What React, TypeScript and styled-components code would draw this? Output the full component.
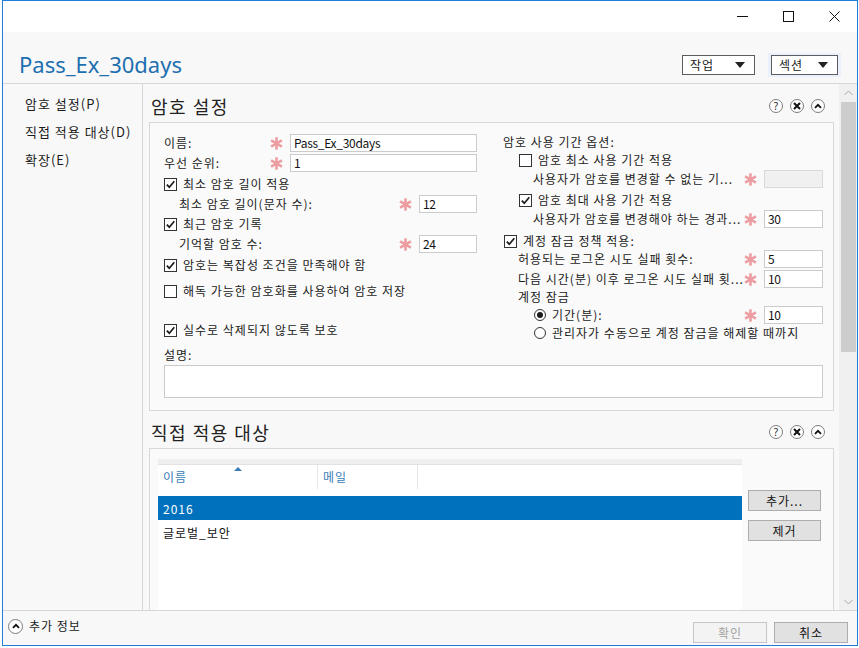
import React from "react";
import styled, { createGlobalStyle } from "styled-components";

const GlobalStyle = createGlobalStyle`
  html, body {
    margin: 0;
    padding: 0;
    background: #fff;
  }
  body {
    font-family: "Noto Sans CJK KR", "Noto Sans", sans-serif;
    font-size: 12px;
    letter-spacing: 1px;
    color: #1b1b1b;
  }
  * {
    box-sizing: border-box;
  }
`;

// Window frame
const Window = styled.div`
  margin-left: 2px;
  width: 856px;
  height: 646px;
  border: 1px solid #1f7fd6;
  display: flex;
  flex-direction: column;
  background: #f8f8f8;
  overflow: hidden;
`;

const TitleBar = styled.div`
  height: 31px;
  flex-shrink: 0;
  background: #fff;
  display: flex;
  justify-content: flex-end;
`;

const CaptionButton = styled.div`
  width: 46px;
  height: 31px;
  display: flex;
  align-items: center;
  justify-content: center;
`;

const Header = styled.div`
  height: 52px;
  flex-shrink: 0;
  border-bottom: 1px solid #d6d6d6;
  display: flex;
  align-items: flex-start;
  justify-content: space-between;
  padding: 0 16px 0 16px;
`;

const PageTitle = styled.div`
  margin-top: 17px;
  font-family: "Noto Sans", sans-serif;
  font-size: 22px;
  line-height: 30px;
  letter-spacing: 0;
  color: #1d6fb0;
`;

const HeaderActions = styled.div`
  margin-top: 21px;
  display: flex;
  align-items: center;
  gap: 10px;
`;

const DropHalo = styled.div<{ $active?: boolean }>`
  padding: 2px 3px;
  background: ${(p) => (p.$active ? "#eaf1fc" : "transparent")};
`;

const DropBox = styled.div<{ $w: number }>`
  width: ${(p) => p.$w}px;
  height: 20px;
  border: 1px solid #5c5c5c;
  background: #fff;
  display: flex;
  align-items: center;
  justify-content: space-between;
  padding: 0 9px 0 7px;
  line-height: 16px;
`;

// Body
const Body = styled.div`
  flex: 1;
  display: flex;
  min-height: 0;
`;

const Nav = styled.div`
  width: 140px;
  flex-shrink: 0;
  border-right: 1px solid #d6d6d6;
  padding-top: 5px;
`;

const NavItem = styled.div`
  height: 28px;
  display: flex;
  align-items: center;
  padding-left: 22px;
  font-size: 13px;
  color: #1b1b1b;
`;

const Main = styled.div`
  width: 696px;
  flex-shrink: 0;
  overflow: hidden;
  padding: 0 5px 0 6px;
`;

const SectionHeader = styled.div<{ $h: number }>`
  height: ${(p) => p.$h}px;
  padding: 5px 9px 0 2px;
  display: flex;
  align-items: center;
  justify-content: space-between;
`;

const SectionTitle = styled.div`
  font-size: 18px;
  line-height: 24px;
  letter-spacing: 1.5px;
  color: #222;
`;

const SectionIcons = styled.div`
  display: flex;
  gap: 7px;
`;

const RoundIcon = styled.div<{ $size?: number }>`
  width: ${(p) => p.$size ?? 14}px;
  height: ${(p) => p.$size ?? 14}px;
  border-radius: 50%;
  border: 1px solid #7d7d7d;
  background: #fff;
  display: flex;
  align-items: center;
  justify-content: center;
  font-family: "Noto Sans", sans-serif;
  font-size: 10px;
  line-height: 10px;
  letter-spacing: 0;
  color: #222;
`;

const Panel = styled.div<{ $pad: string }>`
  border: 1px solid #d8d8d8;
  background: #fafafa;
  padding: ${(p) => p.$pad};
`;

const Columns = styled.div`
  display: grid;
  grid-template-columns: 313px 320px;
  column-gap: 26px;
`;

const Column = styled.div`
  display: flex;
  flex-direction: column;
`;

const FieldRow = styled.div<{ $h?: number; $mt?: number; $indent?: number }>`
  height: ${(p) => p.$h ?? 20}px;
  margin-top: ${(p) => p.$mt ?? 0}px;
  padding-left: ${(p) => p.$indent ?? 0}px;
  display: flex;
  align-items: center;
  white-space: nowrap;
`;

const Label = styled.div`
  flex: 1;
  min-width: 0;
  overflow: hidden;
  line-height: 16px;
`;

const AsteriskWrap = styled.div`
  width: 14px;
  height: 14px;
  margin-right: 7px;
  display: flex;
  align-items: center;
  justify-content: center;
  flex-shrink: 0;
`;

const TextBox = styled.div<{ $w: number; $disabled?: boolean }>`
  width: ${(p) => p.$w}px;
  height: 18px;
  flex-shrink: 0;
  border: 1px solid ${(p) => (p.$disabled ? "#d9d9d9" : "#cbcbcb")};
  background: ${(p) => (p.$disabled ? "#f0f0f0" : "#fff")};
  padding-left: 3px;
  line-height: 16px;
  letter-spacing: -0.3px;
  color: #111;
`;

const OptionLine = styled.div<{ $grow?: boolean }>`
  display: flex;
  align-items: center;
  gap: 6px;
  line-height: 16px;
  flex: ${(p) => (p.$grow ? 1 : "0 0 auto")};
`;

const CheckBox = styled.div`
  width: 13px;
  height: 13px;
  border: 1px solid #333;
  background: #fff;
  flex-shrink: 0;
  display: flex;
  align-items: center;
  justify-content: center;
`;

const RadioDot = styled.div<{ $on?: boolean }>`
  width: 12px;
  height: 12px;
  border-radius: 50%;
  border: 1px solid #333;
  background: #fff;
  flex-shrink: 0;
  display: flex;
  align-items: center;
  justify-content: center;

  &::after {
    content: "";
    width: 6px;
    height: 6px;
    border-radius: 50%;
    background: ${(p) => (p.$on ? "#1b1b1b" : "transparent")};
  }
`;

const DescArea = styled.div`
  margin-top: 1px;
  height: 33px;
  border: 1px solid #cbcbcb;
  background: #fff;
`;

// Section 2 list
const ListWrap = styled.div`
  display: flex;
  gap: 6px;
`;

const List = styled.div`
  width: 585px;
  height: 200px;
  background: #fff;
  border-top: 5px solid #efefef;
`;

const ListHead = styled.div`
  height: 25px;
  border-top: 1px solid #e2e2e2;
  display: flex;
`;

const HeadCell = styled.div<{ $w: number }>`
  position: relative;
  width: ${(p) => p.$w}px;
  border-right: 1px solid #e6e6e6;
  padding: 4px 0 0 5px;
  color: #3a7cb6;
  line-height: 16px;
`;

const SortArrow = styled.div`
  position: absolute;
  left: 76px;
  top: 2px;
  width: 0;
  height: 0;
  border-left: 4px solid transparent;
  border-right: 4px solid transparent;
  border-bottom: 4px solid #3a7cb6;
`;

const ListRow = styled.div<{ $selected?: boolean }>`
  height: 24px;
  display: flex;
  align-items: center;
  padding-left: 5px;
  background: ${(p) => (p.$selected ? "#0072bd" : "transparent")};
  color: ${(p) => (p.$selected ? "#fff" : "#111")};
`;

const ListBody = styled.div`
  padding-top: 7px;
`;

const SideButtons = styled.div`
  margin-top: 31px;
  display: flex;
  flex-direction: column;
  gap: 9px;
`;

const Button = styled.div<{ $w?: number; $disabled?: boolean }>`
  width: ${(p) => p.$w ?? 73}px;
  height: 21px;
  border: 1px solid ${(p) => (p.$disabled ? "#c6c6c6" : "#adadad")};
  background: ${(p) => (p.$disabled ? "#f3f3f3" : "#e1e1e1")};
  color: ${(p) => (p.$disabled ? "#a3a3a3" : "#111")};
  display: flex;
  align-items: center;
  justify-content: center;
  line-height: 16px;
`;

// Scrollbar
const ScrollTrack = styled.div`
  width: 18px;
  flex-shrink: 0;
  background: #f0f0f0;
  display: flex;
  flex-direction: column;
`;

const ScrollArrow = styled.div`
  height: 17px;
  display: flex;
  align-items: center;
  justify-content: center;
`;

const ScrollThumb = styled.div`
  margin: 1px 1px 0 2px;
  height: 250px;
  background: #cdcdcd;
`;

const ScrollGap = styled.div`
  flex: 1;
`;

// Footer
const Footer = styled.div`
  height: 35px;
  flex-shrink: 0;
  border-top: 1px solid #d6d6d6;
  display: flex;
  justify-content: space-between;
  align-items: flex-start;
  padding: 0 9px 0 5px;
`;

const MoreInfo = styled.div`
  margin-top: 7px;
  display: flex;
  align-items: center;
  gap: 6px;
  line-height: 16px;
`;

const FooterButtons = styled.div`
  margin-top: 11px;
  display: flex;
  gap: 7px;
`;

const Asterisk = () => (
  <AsteriskWrap>
    <svg width="13" height="13" viewBox="0 0 13 13">
      <g stroke="#ec9da1" strokeWidth="2.6">
        <line x1="6.5" y1="0.3" x2="6.5" y2="12.7" />
        <line x1="1.1" y1="3.4" x2="11.9" y2="9.6" />
        <line x1="1.1" y1="9.6" x2="11.9" y2="3.4" />
      </g>
    </svg>
  </AsteriskWrap>
);

const Check: React.FC<{ checked?: boolean; label: string }> = ({ checked, label }) => (
  <OptionLine>
    <CheckBox>
      {checked && (
        <svg width="11" height="11" viewBox="0 0 11 11">
          <path d="M1.8 5.6 L4.3 8.2 L9.3 2.2" fill="none" stroke="#1b1b1b" strokeWidth="1.7" />
        </svg>
      )}
    </CheckBox>
    <span>{label}</span>
  </OptionLine>
);

const Radio: React.FC<{ checked?: boolean; label: string }> = ({ checked, label }) => (
  <OptionLine $grow>
    <RadioDot $on={checked} />
    <span>{label}</span>
  </OptionLine>
);

const Caret = () => (
  <svg width="10" height="6" viewBox="0 0 10 6">
    <path d="M0 0 H10 L5 6 Z" fill="#222" />
  </svg>
);

const Chevron: React.FC<{ down?: boolean }> = ({ down }) => (
  <svg width="9" height="6" viewBox="0 0 9 6">
    <path
      d={down ? "M0.5 1 L4.5 5 L8.5 1" : "M0.5 5 L4.5 1 L8.5 5"}
      fill="none"
      stroke="#a6a6a6"
      strokeWidth="1"
    />
  </svg>
);

const UpGlyph = () => (
  <svg width="8" height="6" viewBox="0 0 8 6">
    <path d="M1 4.8 L4 1.8 L7 4.8" fill="none" stroke="#111" strokeWidth="1.8" />
  </svg>
);

const PanelIcons = () => (
  <SectionIcons>
    <RoundIcon>?</RoundIcon>
    <RoundIcon>
      <svg width="8" height="8" viewBox="0 0 8 8">
        <path d="M1 1 L7 7 M7 1 L1 7" stroke="#111" strokeWidth="2" />
      </svg>
    </RoundIcon>
    <RoundIcon>
      <UpGlyph />
    </RoundIcon>
  </SectionIcons>
);

export default function App() {
  return (
    <>
      <GlobalStyle />
      <Window>
        <TitleBar>
          <CaptionButton>
            <svg width="11" height="11" viewBox="0 0 11 11">
              <line x1="0" y1="5.5" x2="11" y2="5.5" stroke="#111" strokeWidth="1" />
            </svg>
          </CaptionButton>
          <CaptionButton>
            <svg width="11" height="11" viewBox="0 0 11 11">
              <rect x="0.5" y="0.5" width="10" height="10" fill="none" stroke="#111" strokeWidth="1" />
            </svg>
          </CaptionButton>
          <CaptionButton>
            <svg width="11" height="11" viewBox="0 0 11 11">
              <path d="M0.5 0.5 L10.5 10.5 M10.5 0.5 L0.5 10.5" stroke="#111" strokeWidth="1" />
            </svg>
          </CaptionButton>
        </TitleBar>

        <Header>
          <PageTitle>Pass_Ex_30days</PageTitle>
          <HeaderActions>
            <DropHalo>
              <DropBox $w={73}>
                <span>작업</span>
                <Caret />
              </DropBox>
            </DropHalo>
            <DropHalo $active>
              <DropBox $w={67}>
                <span>섹션</span>
                <Caret />
              </DropBox>
            </DropHalo>
          </HeaderActions>
        </Header>

        <Body>
          <Nav>
            <NavItem>암호 설정(P)</NavItem>
            <NavItem>직접 적용 대상(D)</NavItem>
            <NavItem>확장(E)</NavItem>
          </Nav>

          <Main>
            <SectionHeader $h={38}>
              <SectionTitle>암호 설정</SectionTitle>
              <PanelIcons />
            </SectionHeader>
            <Panel $pad="10px 10px 12px 14px">
              <Columns>
                <Column>
                  <FieldRow>
                    <Label>이름:</Label>
                    <Asterisk />
                    <TextBox $w={187}>Pass_Ex_30days</TextBox>
                  </FieldRow>
                  <FieldRow>
                    <Label>우선 순위:</Label>
                    <Asterisk />
                    <TextBox $w={187}>1</TextBox>
                  </FieldRow>
                  <FieldRow $mt={1}>
                    <Check checked label="최소 암호 길이 적용" />
                  </FieldRow>
                  <FieldRow $indent={15}>
                    <Label>최소 암호 길이(문자 수):</Label>
                    <Asterisk />
                    <TextBox $w={58}>12</TextBox>
                  </FieldRow>
                  <FieldRow>
                    <Check checked label="최근 암호 기록" />
                  </FieldRow>
                  <FieldRow $indent={15}>
                    <Label>기억할 암호 수:</Label>
                    <Asterisk />
                    <TextBox $w={58}>24</TextBox>
                  </FieldRow>
                  <FieldRow $mt={1}>
                    <Check checked label="암호는 복잡성 조건을 만족해야 함" />
                  </FieldRow>
                  <FieldRow $mt={6}>
                    <Check label="해독 가능한 암호화를 사용하여 암호 저장" />
                  </FieldRow>
                  <FieldRow $mt={19}>
                    <Check checked label="실수로 삭제되지 않도록 보호" />
                  </FieldRow>
                </Column>

                <Column>
                  <FieldRow $h={18}>
                    <Label>암호 사용 기간 옵션:</Label>
                  </FieldRow>
                  <FieldRow $h={18} $indent={16}>
                    <Check label="암호 최소 사용 기간 적용" />
                  </FieldRow>
                  <FieldRow $h={18} $mt={1} $indent={30}>
                    <Label>사용자가 암호를 변경할 수 없는 기...</Label>
                    <Asterisk />
                    <TextBox $w={59} $disabled />
                  </FieldRow>
                  <FieldRow $h={18} $mt={3} $indent={16}>
                    <Check checked label="암호 최대 사용 기간 적용" />
                  </FieldRow>
                  <FieldRow $h={18} $mt={1} $indent={30}>
                    <Label>사용자가 암호를 변경해야 하는 경과...</Label>
                    <Asterisk />
                    <TextBox $w={59}>30</TextBox>
                  </FieldRow>
                  <FieldRow $h={18} $mt={4} $indent={1}>
                    <Check checked label="계정 잠금 정책 적용:" />
                  </FieldRow>
                  <FieldRow $h={18} $indent={15}>
                    <Label>허용되는 로그온 시도 실패 횟수:</Label>
                    <Asterisk />
                    <TextBox $w={59}>5</TextBox>
                  </FieldRow>
                  <FieldRow $h={18} $mt={2} $indent={15}>
                    <Label>다음 시간(분) 이후 로그온 시도 실패 횟...</Label>
                    <Asterisk />
                    <TextBox $w={59}>10</TextBox>
                  </FieldRow>
                  <FieldRow $h={18} $indent={15}>
                    <Label>계정 잠금</Label>
                  </FieldRow>
                  <FieldRow $h={18} $indent={31}>
                    <Radio checked label="기간(분):" />
                    <Asterisk />
                    <TextBox $w={59}>10</TextBox>
                  </FieldRow>
                  <FieldRow $h={18} $indent={31}>
                    <Radio label="관리자가 수동으로 계정 잠금을 해제할 때까지" />
                  </FieldRow>
                </Column>
              </Columns>
              <FieldRow $h={18} $mt={4}>
                <Label>설명:</Label>
              </FieldRow>
              <DescArea />
            </Panel>

            <SectionHeader $h={37}>
              <SectionTitle>직접 적용 대상</SectionTitle>
              <PanelIcons />
            </SectionHeader>
            <Panel $pad="10px 12px 0 8px">
              <ListWrap>
                <List>
                  <ListHead>
                    <HeadCell $w={160}>
                      이름
                      <SortArrow />
                    </HeadCell>
                    <HeadCell $w={100}>메일</HeadCell>
                  </ListHead>
                  <ListBody>
                    <ListRow $selected>2016</ListRow>
                    <ListRow>글로벌_보안</ListRow>
                  </ListBody>
                </List>
                <SideButtons>
                  <Button>추가...</Button>
                  <Button>제거</Button>
                </SideButtons>
              </ListWrap>
            </Panel>
          </Main>

          <ScrollTrack>
            <ScrollArrow>
              <Chevron />
            </ScrollArrow>
            <ScrollThumb />
            <ScrollGap />
            <ScrollArrow>
              <Chevron down />
            </ScrollArrow>
          </ScrollTrack>
        </Body>

        <Footer>
          <MoreInfo>
            <RoundIcon $size={15}>
              <UpGlyph />
            </RoundIcon>
            <span>추가 정보</span>
          </MoreInfo>
          <FooterButtons>
            <Button $w={74} $disabled>
              확인
            </Button>
            <Button $w={74}>취소</Button>
          </FooterButtons>
        </Footer>
      </Window>
    </>
  );
}
